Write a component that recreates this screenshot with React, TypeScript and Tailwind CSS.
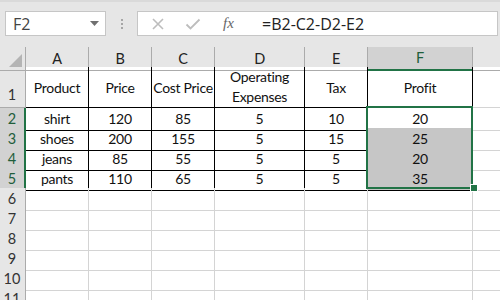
import React from "react";

const COLS = ["A", "B", "C", "D", "E", "F", "G"];

const DATA: string[][] = [
  ["shirt", "120", "85", "5", "10", "20"],
  ["shoes", "200", "155", "5", "15", "25"],
  ["jeans", "85", "55", "5", "5", "20"],
  ["pants", "110", "65", "5", "5", "35"],
];

const GRID = "grid grid-cols-[26px_63px_63px_63px_90px_63px_105px_63px]";

function RowHeader({ n, active, tall }: { n: number; active?: boolean; tall?: boolean }) {
  return (
    <div
      className={`flex justify-center border-b border-r border-[#ababab] pr-[1px] text-[14.5px] tracking-normal ${
        tall ? "items-end pb-[1px]" : "items-center"
      } ${active ? "bg-[#d2d2d2] border-r-[#217346] border-r-2 text-[#1f5e3b] pl-[1px]" : "bg-[#e6e6e6] text-[#333]"}`}
    >
      {n}
    </div>
  );
}

export default function App() {
  return (
    <div className="w-[500px] h-[300px] overflow-hidden bg-white font-['Lato','Liberation_Sans',sans-serif] text-[#111]">
      {/* formula bar */}
      <div className="h-[47px] bg-[#e6e6e6] border-t-[2px] border-[#dadada] pt-[9px] pl-[5px] pr-[2px]">
        <div className="flex h-[25px] items-stretch">
          <div className="w-[101px] flex items-center justify-between bg-white border border-[#c6c6c6] pl-[7px] pr-[6px] font-['Open_Sans',sans-serif] text-[16px] text-[#444]">
            <span>F2</span>
            <svg width="9" height="5" viewBox="0 0 9 5">
              <path d="M0 0 L9 0 L4.5 5 Z" fill="#707070" />
            </svg>
          </div>
          <div className="w-[31px] flex flex-col items-center justify-center gap-[2px]">
            <span className="w-[2px] h-[2px] bg-[#a6a6a6]" />
            <span className="w-[2px] h-[2px] bg-[#a6a6a6]" />
            <span className="w-[2px] h-[2px] bg-[#a6a6a6]" />
          </div>
          <div className="flex-1 flex items-center bg-white border border-[#c6c6c6]">
            <div className="w-[120px] flex items-center pl-[13px] gap-[20px]">
              <svg width="14" height="14" viewBox="0 0 14 14">
                <path d="M2 2 L12 12 M12 2 L2 12" stroke="#bdbdbd" strokeWidth="1.6" />
              </svg>
              <svg width="16" height="14" viewBox="0 0 16 14">
                <path d="M1.5 7.5 L5.5 11.5 L14.5 2.5" stroke="#bdbdbd" strokeWidth="1.8" fill="none" />
              </svg>
              <span className="ml-[2px] font-['Liberation_Serif',serif] italic text-[15px] text-[#666]">fx</span>
            </div>
            <span className="pl-[4px] font-['Open_Sans',sans-serif] text-[16px] text-[#222]">=B2-C2-D2-E2</span>
          </div>
        </div>
      </div>

      {/* sheet */}
      <div className="relative tracking-[-0.3px]">
        <div className={`${GRID} h-[20px] bg-[#e6e6e6]`}>
          <div className="relative border-r border-b border-[#ababab]">
            <svg className="absolute right-[3px] bottom-[3px]" width="13" height="13" viewBox="0 0 13 13">
              <path d="M13 0 L13 13 L0 13 Z" fill="#b4b4b4" />
            </svg>
          </div>
          {COLS.map((c) => (
            <div
              key={c}
              className={`flex items-center justify-center text-[14.5px] border-r border-[#ababab] ${
                c === "F" ? "bg-[#d2d2d2] text-[#1f5e3b] border-b-2 border-b-[#217346]" : "border-b border-b-[#ababab] text-[#222]"
              }`}
            >
              {c === "G" ? "" : c}
            </div>
          ))}
        </div>

        {/* row 1 */}
        <div className={`${GRID} h-[41px] text-[14px]`}>
          <RowHeader n={1} tall />
          {["Product", "Price", "Cost Price"].map((t) => (
            <div key={t} className="flex items-center justify-center border-r border-b border-black whitespace-nowrap">
              {t}
            </div>
          ))}
          <div className="flex items-center justify-center text-center leading-[20px] border-r border-b border-black">
            Operating
            <br />
            Expenses
          </div>
          <div className="flex items-center justify-center border-r border-b border-black">Tax</div>
          <div className="flex items-center justify-center border-r border-b border-black">Profit</div>
          <div className="border-r border-b border-[#d4d4d4]" />
        </div>

        {DATA.map((row, i) => (
          <div key={i} className={`${GRID} h-[20px] text-[14px]`}>
            <RowHeader n={i + 2} active />
            {row.map((v, j) => (
              <div
                key={j}
                className={`flex items-center justify-center border-r border-b border-black ${
                  j === 5 && i > 0 ? "bg-[#c6c6c6]" : ""
                }`}
              >
                {v}
              </div>
            ))}
            <div className="border-r border-b border-[#d4d4d4]" />
          </div>
        ))}

        {[6, 7, 8, 9, 10, 11].map((n) => (
          <div key={n} className={`${GRID} h-[20px]`}>
            <RowHeader n={n} />
            {COLS.map((c) => (
              <div key={c} className="border-r border-b border-[#d4d4d4]" />
            ))}
          </div>
        ))}

        {/* selection F2:F5 */}
        <div className="absolute left-[366px] top-[59px] w-[107px] h-[83px] border-2 border-[#217346] pointer-events-none" />
        <div className="absolute left-[470px] top-[137px] w-[8px] h-[8px] bg-[#217346] border border-white pointer-events-none" />
      </div>
    </div>
  );
}
